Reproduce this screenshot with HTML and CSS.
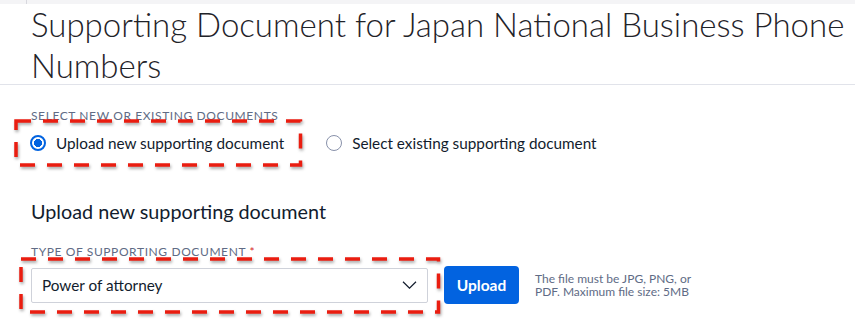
FILE: index.html
```html
<!DOCTYPE html>
<html lang="en">
<head>
  <meta charset="UTF-8" />
  <title>Supporting Document</title>
  <link rel="stylesheet" href="styles.css">
</head>
<body>

  <div class="topstrip"><span class="tick"></span></div>

  <div class="header">
    <h1>Supporting Document for Japan National Business Phone Numbers</h1>
  </div>

  <div class="content">
    <div class="label">Select new or existing documents</div>
    <div class="radios">
      <label class="radio marked">
        <span class="dot checked"></span>
        Upload new supporting document
        <svg class="mark" aria-hidden="true"><rect x="0" y="0" width="100%" height="100%" /></svg>
      </label>
      <label class="radio">
        <span class="dot"></span>
        Select existing supporting document
      </label>
    </div>

    <h2>Upload new supporting document</h2>

    <div class="label">Type of supporting document <span class="req">*</span></div>
    <div class="upload-row">
      <div class="select marked">
        <span>Power of attorney</span>
        <svg class="chev" width="15" height="8" viewBox="0 0 15 8"><path d="M1 .8l6.5 6.4 6.5-6.4" fill="none" stroke="#121c2d" stroke-width="1.2"/></svg>
        <svg class="mark" aria-hidden="true"><rect x="0" y="0" width="100%" height="100%" /></svg>
      </div>
      <button class="btn">Upload</button>
      <p class="help">The file must be JPG, PNG, or PDF. Maximum file size: 5MB</p>
    </div>
  </div>

</body>
</html>
```

FILE: styles.css
```css
* {
  box-sizing: border-box;
}

body {
  margin: 0;
  min-height: 100vh;
  background: #fff;
  color: #121c2d;
  font-family: Lato, 'Open Sans', sans-serif;
}

.topstrip {
  height: 4px;
  background: #f4f4f6;
}

.tick {
  display: block;
  margin-left: 26px;
  width: 1px;
  height: 4px;
  background: #d8d8de;
}

.header {
  padding-left: 31px;
  border-bottom: 1px solid #e1e3ea;
  height: 81px;
}

h1 {
  margin: 0;
  font-size: 33px;
  font-weight: 300;
  line-height: 41px;
  color: #1f2329;
}

.content {
  padding: 23px 0 0 31px;
}

.label {
  font-size: 12px;
  letter-spacing: 0.6px;
  text-transform: uppercase;
  color: #606b85;
  line-height: 16px;
}

.req {
  color: #d61f1f;
}

.radios {
  display: flex;
  gap: 42px;
  margin-top: 4px;
  margin-left: -1px;
  height: 30px;
}

.radio {
  display: flex;
  align-items: center;
  gap: 10px;
  font-size: 15.3px;
  position: relative;
}

.dot {
  width: 16px;
  height: 16px;
  border-radius: 50%;
  border: 1px solid #8891aa;
  background: #fff;
}

.dot.checked {
  border: 2px solid #0263e0;
  background: radial-gradient(circle, #0263e0 0 3.8px, #fff 4.3px);
}

h2 {
  margin: 40px 0 0;
  font-size: 19.8px;
  font-weight: 400;
  line-height: 26px;
}

.content h2 + .label {
  margin-top: 20px;
}

.upload-row {
  display: flex;
  align-items: center;
  margin-top: 6px;
}

.select {
  width: 397px;
  height: 35px;
  border: 1px solid #cfd2da;
  border-radius: 2px;
  padding: 0 10px;
  display: flex;
  align-items: center;
  justify-content: space-between;
  font-size: 15.3px;
  position: relative;
}

.btn {
  margin-left: 16px;
  width: 75px;
  height: 38px;
  border: none;
  border-radius: 4px;
  background: #0263e0;
  color: #fff;
  font-family: Lato, sans-serif;
  font-weight: 700;
  font-size: 15.5px;
}

.help {
  margin: 0 0 0 16px;
  width: 160px;
  font-size: 12px;
  line-height: 13.5px;
  color: #606b85;
}

/* red dashed annotation boxes */
.mark {
  position: absolute;
  overflow: visible;
  pointer-events: none;
  filter: drop-shadow(1.5px 2px 1.5px rgba(0, 0, 0, 0.35));
}

.mark rect {
  fill: none;
  stroke: #ea1d10;
  stroke-width: 3.5;
  stroke-dasharray: 15 12;
}

.radio .mark {
  left: -14.5px;
  top: -7.5px;
  width: 284.5px;
  height: 44px;
}

.select .mark {
  left: -11px;
  top: -10px;
  width: 417.5px;
  height: 53px;
}
```
